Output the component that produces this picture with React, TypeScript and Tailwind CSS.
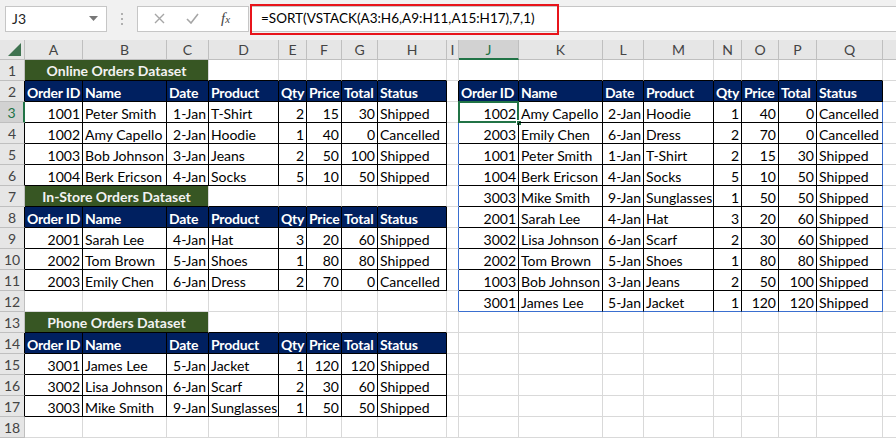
import React from "react";

type Row = (string | number)[];

const COLS = ["A", "B", "C", "D", "E", "F", "G", "H", "I", "J", "K", "L", "M", "N", "O", "P", "Q", ""];
const HEAD = ["Order ID", "Name", "Date", "Product", "Qty", "Price", "Total", "Status"];
// alignment per table column: r = number-like, l = text
const ALIGN = ["r", "l", "r", "l", "r", "r", "r", "l"];

const online: Row[] = [
  [1001, "Peter Smith", "1-Jan", "T-Shirt", 2, 15, 30, "Shipped"],
  [1002, "Amy Capello", "2-Jan", "Hoodie", 1, 40, 0, "Cancelled"],
  [1003, "Bob Johnson", "3-Jan", "Jeans", 2, 50, 100, "Shipped"],
  [1004, "Berk Ericson", "4-Jan", "Socks", 5, 10, 50, "Shipped"],
];
const inStore: Row[] = [
  [2001, "Sarah Lee", "4-Jan", "Hat", 3, 20, 60, "Shipped"],
  [2002, "Tom Brown", "5-Jan", "Shoes", 1, 80, 80, "Shipped"],
  [2003, "Emily Chen", "6-Jan", "Dress", 2, 70, 0, "Cancelled"],
];
const phone: Row[] = [
  [3001, "James Lee", "5-Jan", "Jacket", 1, 120, 120, "Shipped"],
  [3002, "Lisa Johnson", "6-Jan", "Scarf", 2, 30, 60, "Shipped"],
  [3003, "Mike Smith", "9-Jan", "Sunglasses", 1, 50, 50, "Shipped"],
];
const sorted: Row[] = [
  [1002, "Amy Capello", "2-Jan", "Hoodie", 1, 40, 0, "Cancelled"],
  [2003, "Emily Chen", "6-Jan", "Dress", 2, 70, 0, "Cancelled"],
  [1001, "Peter Smith", "1-Jan", "T-Shirt", 2, 15, 30, "Shipped"],
  [1004, "Berk Ericson", "4-Jan", "Socks", 5, 10, 50, "Shipped"],
  [3003, "Mike Smith", "9-Jan", "Sunglasses", 1, 50, 50, "Shipped"],
  [2001, "Sarah Lee", "4-Jan", "Hat", 3, 20, 60, "Shipped"],
  [3002, "Lisa Johnson", "6-Jan", "Scarf", 2, 30, 60, "Shipped"],
  [2002, "Tom Brown", "5-Jan", "Shoes", 1, 80, 80, "Shipped"],
  [1003, "Bob Johnson", "3-Jan", "Jeans", 2, 50, 100, "Shipped"],
  [3001, "James Lee", "5-Jan", "Jacket", 1, 120, 120, "Shipped"],
];

type Kind = "head" | "data" | "empty";
type CellInfo = { kind: Kind; text?: string; align?: string };

const titles: Record<number, string> = {
  1: "Online Orders Dataset",
  7: "In-Store Orders Dataset",
  13: "Phone Orders Dataset",
};

function cellAt(r: number, c: number): CellInfo {
  if (c >= 1 && c <= 8) {
    const k = c - 1;
    if (r === 2 || r === 8 || r === 14) return { kind: "head", text: HEAD[k] };
    if (r >= 3 && r <= 6) return { kind: "data", text: String(online[r - 3][k]), align: ALIGN[k] };
    if (r >= 9 && r <= 11) return { kind: "data", text: String(inStore[r - 9][k]), align: ALIGN[k] };
    if (r >= 15 && r <= 17) return { kind: "data", text: String(phone[r - 15][k]), align: ALIGN[k] };
  }
  if (c >= 10 && c <= 17) {
    const k = c - 10;
    if (r === 2) return { kind: "head", text: HEAD[k] };
    if (r >= 3 && r <= 12) return { kind: "data", text: String(sorted[r - 3][k]), align: ALIGN[k] };
  }
  return { kind: "empty" };
}

function inTable(r: number, c: number) {
  if (c >= 1 && c <= 8) return (r >= 2 && r <= 6) || (r >= 8 && r <= 11) || (r >= 14 && r <= 17);
  if (c >= 10 && c <= 17) return r >= 2 && r <= 12;
  return false;
}

const spill = (r: number) => r >= 3 && r <= 12;

function rightBorder(r: number, c: number) {
  if ((c === 9 || c === 17) && spill(r)) return "border-r-[#3a6fd0]";
  if (inTable(r, c) || inTable(r, c + 1)) return "border-r-black";
  return "border-r-[#d9d9d9]";
}

function bottomBorder(r: number, c: number) {
  if (r === 12 && c >= 10 && c <= 17) return "border-b-[#3a6fd0]";
  if (inTable(r, c) || inTable(r + 1, c)) return "border-b-black";
  return "border-b-[#d9d9d9]";
}

function FormulaBar() {
  return (
    <div className="flex h-[40px] items-center bg-[#f1f1f1] pb-[4px] pt-[1px]">
      <div className="ml-[5px] flex h-[26px] w-[102px] items-center justify-between border border-[#c6c6c6] bg-white pl-[6px] pr-[8px] text-[14px] text-[#222]">
        <span>J3</span>
        <svg width="9" height="5" viewBox="0 0 9 5">
          <path d="M0 0h9L4.5 5z" fill="#777" />
        </svg>
      </div>
      <div className="mx-[14px] flex flex-col gap-[3px]">
        <span className="h-[2px] w-[2px] bg-[#b0b0b0]" />
        <span className="h-[2px] w-[2px] bg-[#b0b0b0]" />
        <span className="h-[2px] w-[2px] bg-[#b0b0b0]" />
      </div>
      <div className="flex h-[26px] w-[112px] items-center border border-[#c6c6c6] bg-white">
        <svg className="ml-[16px]" width="11" height="11" viewBox="0 0 11 11">
          <path d="M1 1l9 9M10 1l-9 9" stroke="#a6a6a6" strokeWidth="1.4" />
        </svg>
        <svg className="ml-[21px]" width="13" height="11" viewBox="0 0 13 11">
          <path d="M1 6l4 4 7-9" stroke="#a6a6a6" strokeWidth="1.6" fill="none" />
        </svg>
        <span className="ml-[22px] font-['Liberation_Serif',serif] text-[15px] italic text-[#444]">
          f<span className="text-[11px]">x</span>
        </span>
      </div>
      <div className="relative ml-[1px] flex h-[26px] flex-1 items-center border-y border-[#c6c6c6] bg-white">
        <div className="absolute left-0 top-[-3px] h-[31px] w-[309px] border-2 border-[#e8141b]" />
        <span className="pl-[11px] text-[13.5px] text-black">=SORT(VSTACK(A3:H6,A9:H11,A15:H17),7,1)</span>
      </div>
    </div>
  );
}

function ColumnHeaders() {
  return (
    <>
      <div className="relative border-b border-r border-[#bfbfbf] bg-[#e6e6e6]">
        <svg className="absolute bottom-[3px] right-[3px]" width="13" height="13" viewBox="0 0 13 13">
          <path d="M13 0v13H0z" fill="#3f7350" />
        </svg>
      </div>
      {COLS.map((col, i) =>
        col === "J" ? (
          <div
            key={i}
            className="flex items-center justify-center border-b-2 border-r border-b-[#217346] border-r-[#bfbfbf] bg-[#d2d2d2] text-[14px] text-[#217346]"
          >
            {col}
          </div>
        ) : (
          <div
            key={i}
            className="flex items-center justify-center border-b border-r border-[#bfbfbf] bg-[#e6e6e6] text-[14px] text-[#444]"
          >
            {col}
          </div>
        )
      )}
    </>
  );
}

function RowHeader({ r }: { r: number }) {
  if (r === 3)
    return (
      <div className="flex items-center justify-center border-b border-r-2 border-b-[#bfbfbf] border-r-[#217346] bg-[#d2d2d2] text-[14px] text-[#217346]">
        {r}
      </div>
    );
  return (
    <div
      className={`flex items-center justify-center border-b border-r border-b-[#bfbfbf] bg-[#e6e6e6] text-[14px] text-[#444] ${
        inTable(r, 1) ? "border-r-black" : "border-r-[#bfbfbf]"
      }`}
    >
      {r}
    </div>
  );
}

function SheetRow({ r }: { r: number }) {
  const cells: React.ReactNode[] = [<RowHeader key="h" r={r} />];
  for (let c = 1; c <= 18; c++) {
    if (titles[r] && c === 1) {
      cells.push(
        <div
          key={c}
          className={`col-span-3 flex items-center justify-center border-r border-b bg-[#375623] pt-[1px] text-[14px] font-bold text-[#f2f2f2] ${rightBorder(r, 3)} ${bottomBorder(r, 1)}`}
        >
          {titles[r]}
        </div>
      );
      c = 3;
      continue;
    }
    const info = cellAt(r, c);
    const borders = `border-r border-b ${rightBorder(r, c)} ${bottomBorder(r, c)}`;
    if (info.kind === "head") {
      cells.push(
        <div
          key={c}
          className={`flex items-center overflow-hidden whitespace-nowrap bg-[#002060] px-[2px] pt-[2px] text-[14px] font-bold tracking-[-0.2px] text-white ${borders}`}
        >
          {info.text}
        </div>
      );
    } else if (info.kind === "data") {
      const sel = r === 3 && c === 10;
      cells.push(
        <div
          key={c}
          className={`relative flex items-center whitespace-nowrap px-[2px] pt-[2px] text-[14px] text-black ${
            info.align === "r" ? "justify-end" : "justify-start"
          } ${borders}`}
        >
          {info.text}
          {sel && (
            <>
              <div className="absolute left-[-1px] top-[-1px] h-[22px] w-[61px] border-2 border-[#217346]" />
              <div className="absolute bottom-[-4px] right-[-4px] h-[6px] w-[6px] border border-white bg-[#217346]" />
            </>
          )}
        </div>
      );
    } else {
      cells.push(<div key={c} className={`bg-white ${borders}`} />);
    }
  }
  return <>{cells}</>;
}

export default function App() {
  const rows = Array.from({ length: 18 }, (_, i) => i + 1);
  return (
    <div className="h-[438px] w-[896px] overflow-hidden bg-white font-[Lato,'Noto_Sans',sans-serif]">
      <FormulaBar />
      <div className="grid grid-cols-[25px_58px_84px_42px_70px_28px_35px_36px_69px_12px_60px_84px_41px_70px_28px_37px_38px_66px_40px] grid-rows-[20px_repeat(18,21px)]">
        <ColumnHeaders />
        {rows.map((r) => (
          <SheetRow key={r} r={r} />
        ))}
      </div>
    </div>
  );
}
